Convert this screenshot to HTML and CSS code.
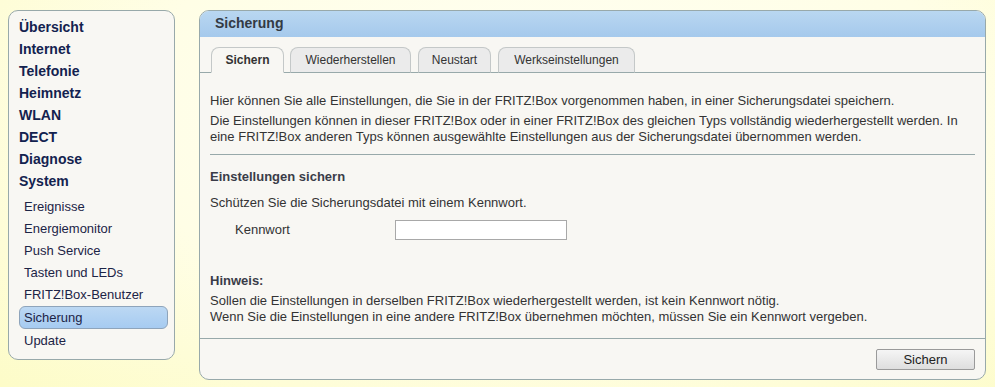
FILE: index.html
```html
<!DOCTYPE html>
<html lang="de">

    <head>
        <meta charset="UTF-8">
        <title>FRITZ!Box - Sicherung</title>
        <link rel="stylesheet" href="styles.css">
    </head>

    <body>
        <div class="page">
            <!-- linke Navigation -->
            <nav class="menu">
                <a class="menu-main">Übersicht</a>
                <a class="menu-main">Internet</a>
                <a class="menu-main">Telefonie</a>
                <a class="menu-main">Heimnetz</a>
                <a class="menu-main">WLAN</a>
                <a class="menu-main">DECT</a>
                <a class="menu-main">Diagnose</a>
                <a class="menu-main">System</a>
                <div class="submenu">
                    <a class="menu-sub">Ereignisse</a>
                    <a class="menu-sub">Energiemonitor</a>
                    <a class="menu-sub">Push Service</a>
                    <a class="menu-sub">Tasten und LEDs</a>
                    <a class="menu-sub">FRITZ!Box-Benutzer</a>
                    <a class="menu-sub active">Sicherung</a>
                    <a class="menu-sub">Update</a>
                </div>
            </nav>

            <!-- Inhalt -->
            <div class="panel">
                <div class="panel-head">Sicherung</div>
                <div class="tabs">
                    <div class="tab active">Sichern</div>
                    <div class="tab">Wiederherstellen</div>
                    <div class="tab">Neustart</div>
                    <div class="tab">Werkseinstellungen</div>
                </div>
                <div class="content">
                    <p>Hier können Sie alle Einstellungen, die Sie in der FRITZ!Box vorgenommen haben, in einer Sicherungsdatei speichern.</p>
                    <p>Die Einstellungen können in dieser FRITZ!Box oder in einer FRITZ!Box des gleichen Typs vollständig wiederhergestellt werden. In eine FRITZ!Box anderen Typs können ausgewählte Einstellungen aus der Sicherungsdatei übernommen werden.</p>
                    <hr>
                    <h4>Einstellungen sichern</h4>
                    <p class="spaced">Schützen Sie die Sicherungsdatei mit einem Kennwort.</p>
                    <div class="form-row">
                        <label for="pw">Kennwort</label>
                        <input id="pw" type="password">
                    </div>
                    <h4 class="hint">Hinweis:</h4>
                    <p>Sollen die Einstellungen in derselben FRITZ!Box wiederhergestellt werden, ist kein Kennwort nötig.<br>
                        Wenn Sie die Einstellungen in eine andere FRITZ!Box übernehmen möchten, müssen Sie ein Kennwort vergeben.</p>
                </div>
                <div class="panel-foot">
                    <button>Sichern</button>
                </div>
            </div>
        </div>
    </body>

</html>
```

FILE: styles.css
```css
body {
    margin: 0;
    min-height: 387px;
    font-family: "Liberation Sans", Arial, sans-serif;
    font-size: 13px;
    color: #333;
    background: radial-gradient(ellipse at 55% 30%, #fffff4 0%, #fffee6 55%, #fdfcc8 100%);
}

.page {
    display: flex;
    align-items: flex-start;
    gap: 24px;
    padding: 10px 0 0 8px;
}

/* Navigation */
.menu {
    display: flex;
    flex-direction: column;
    width: 165px;
    height: 343px;
    box-sizing: content-box;
    padding-top: 5px;
    background-color: #f8f7f3;
    border: 1px solid #98a9aa;
    border-radius: 10px;
}

.menu-main {
    height: 22px;
    line-height: 22px;
    padding-left: 10px;
    font-size: 14px;
    font-weight: bold;
    color: #13224f;
}

.submenu {
    display: flex;
    flex-direction: column;
    margin-top: 4px;
}

.menu-sub {
    height: 22px;
    line-height: 22px;
    padding-left: 15px;
    color: #1c2446;
}

.menu-sub.active {
    height: 21px;
    line-height: 21px;
    margin: 0 6px 1px 10px;
    padding-left: 4px;
    border: 1px solid #8ea4bb;
    border-radius: 6px;
    background: linear-gradient(#bcd8f3, #a6cbf1);
}

/* Panel */
.panel {
    width: 785px;
    height: 368px;
    display: flex;
    flex-direction: column;
    background-color: #f8f7f3;
    border: 1px solid #98a9aa;
    border-radius: 10px;
    overflow: hidden;
}

.panel-head {
    height: 26px;
    line-height: 25px;
    padding-left: 15px;
    font-size: 14px;
    font-weight: bold;
    color: #333a44;
    background: linear-gradient(#b9d7f1, #a5c9ec);
}

.tabs {
    display: flex;
    gap: 6px;
    padding: 10px 0 0 11px;
    border-bottom: 1px solid #98a9aa;
}

.tab {
    height: 24px;
    line-height: 24px;
    margin-bottom: -1px;
    padding: 0 12px;
    min-width: 47px;
    text-align: center;
    font-size: 12px;
    color: #333;
    background-color: #ebebeb;
    border: 1px solid #c4c8c8;
    border-bottom: 1px solid #98a9aa;
    border-radius: 8px 8px 0 0;
}

.tab:nth-child(2) {
    width: 95px;
}

.tab:nth-child(3) {
    width: 47px;
    margin-left: 1px;
}

.tab:nth-child(4) {
    width: 111px;
    margin-left: 1px;
}

.tab.active {
    font-weight: bold;
    background-color: #f8f7f3;
    border-bottom-color: #f8f7f3;
}

.content {
    flex: 1;
    padding: 20px 10px 0 10px;
    line-height: 16px;
}

.content p {
    margin: 0 0 4px 0;
}

.content hr {
    border: none;
    border-top: 1px solid #98a9aa;
    margin: 9px 0 14px 0;
}

.content h4 {
    margin: 0;
    font-size: 13px;
    color: #3a3c48;
}

.content p.spaced {
    margin-top: 10px;
    margin-bottom: 9px;
}

.form-row {
    display: flex;
    align-items: center;
    padding-left: 25px;
}

.form-row label {
    width: 160px;
}

.form-row input {
    width: 168px;
    height: 16px;
    padding: 1px;
    border: 1px solid #a8a8a8;
    background: #fff;
}

.content h4.hint {
    margin-top: 33px;
    margin-bottom: 4px;
}

.panel-foot {
    display: flex;
    justify-content: flex-end;
    padding: 10px 10px 9px 0;
    border-top: 1px solid #98a9aa;
}

button {
    width: 99px;
    height: 21px;
    font-family: "Liberation Sans", Arial, sans-serif;
    font-size: 13px;
    color: #222;
    background: linear-gradient(#f5f5f5, #dedede);
    border: 1px solid #9a9a9a;
    border-radius: 2px;
}
```
